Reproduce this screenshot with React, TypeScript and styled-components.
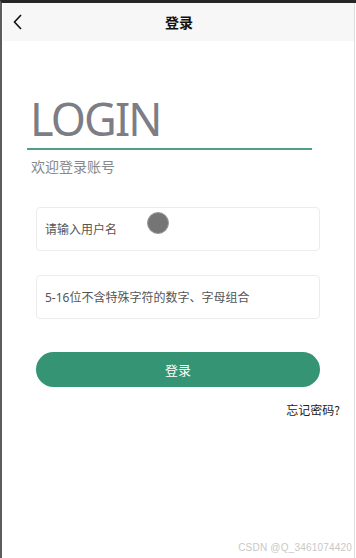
import { createGlobalStyle } from "styled-components";
import styled from "styled-components";

const GlobalStyle = createGlobalStyle`
  html, body {
    margin: 0;
    padding: 0;
    background: #ffffff;
  }
  body {
    font-family: "Noto Sans", "Noto Sans CJK SC", sans-serif;
  }
`;

const App = () => {
  return (
    <>
      <GlobalStyle />
      <Frame>
        <Screen>
          <Header>
            <BackButton>
              <svg width="10" height="16" viewBox="0 0 10 16" fill="none">
                <path d="M8 1 L1.5 8 L8 15" stroke="#111" strokeWidth="1.6" strokeLinejoin="miter" />
              </svg>
            </BackButton>
            <HeaderTitle>登录</HeaderTitle>
          </Header>

          <Content>
            <TitleBlock>
              <BigTitle>LOGIN</BigTitle>
            </TitleBlock>
            <Subtitle>欢迎登录账号</Subtitle>

            <Fields>
              <Field>
                <FieldText>请输入用户名</FieldText>
              </Field>
              <Field>
                <FieldText>5-16位不含特殊字符的数字、字母组合</FieldText>
              </Field>
            </Fields>

            <SubmitButton>登录</SubmitButton>

            <ForgotRow>
              <ForgotLink>忘记密码?</ForgotLink>
            </ForgotRow>
          </Content>

          <TouchDot />
          <Watermark>CSDN @Q_3461074420</Watermark>
        </Screen>
      </Frame>
    </>
  );
};

export default App;

const Frame = styled.div`
  display: flex;
  width: 356px;
  height: 558px;
  box-sizing: border-box;
  border-top: 3px solid #262626;
  border-left: 2px solid #5c5c5c;
  padding: 0 1px 0 1px;
  background: #ffffff;
  overflow: hidden;
`;

const Screen = styled.div`
  position: relative;
  flex: 1;
  display: flex;
  flex-direction: column;
  border-right: 1px solid #dedede;
  background: #ffffff;
`;

const Header = styled.div`
  position: relative;
  height: 38px;
  display: flex;
  align-items: center;
  justify-content: center;
  background: #f7f7f7;
`;

const BackButton = styled.div`
  position: absolute;
  left: 10px;
  top: 11px;
  display: flex;
`;

const HeaderTitle = styled.div`
  font-family: "Noto Sans CJK SC", sans-serif;
  font-size: 14px;
  font-weight: 700;
  color: #111;
  margin-left: 1px;
`;

const Content = styled.div`
  display: flex;
  flex-direction: column;
`;

const TitleBlock = styled.div`
  margin: 52px 0 0 24px;
  width: 285px;
  padding-bottom: 3px;
  border-bottom: 2px solid #4f9f80;
`;

const BigTitle = styled.div`
  font-family: "Noto Sans", sans-serif;
  font-size: 45px;
  line-height: 52px;
  color: #7d7d86;
  padding-left: 3px;
  letter-spacing: -1.9px;
`;

const Subtitle = styled.div`
  margin: 6px 0 0 28px;
  font-family: "Noto Sans CJK SC", sans-serif;
  font-size: 14px;
  line-height: 20px;
  color: #888;
`;

const Fields = styled.div`
  display: flex;
  flex-direction: column;
  gap: 24px;
  margin: 31px 0 0 33px;
  width: 284px;
`;

const Field = styled.div`
  height: 44px;
  box-sizing: border-box;
  border: 1px solid #ececec;
  border-radius: 4px;
  display: flex;
  align-items: center;
  padding-left: 8px;
`;

const FieldText = styled.span`
  font-family: "Noto Sans", "Noto Sans CJK SC", sans-serif;
  font-size: 12px;
  color: #555;
`;

const SubmitButton = styled.div`
  margin: 33px 0 0 33px;
  width: 284px;
  height: 35px;
  border-radius: 18px;
  background: #349474;
  color: #fff;
  font-family: "Noto Sans CJK SC", sans-serif;
  font-size: 13px;
  display: flex;
  align-items: center;
  justify-content: center;
`;

const ForgotRow = styled.div`
  display: flex;
  justify-content: flex-end;
  margin-top: 15px;
  padding-right: 14px;
`;

const ForgotLink = styled.span`
  font-family: "Noto Sans CJK SC", sans-serif;
  font-size: 12px;
  line-height: 16px;
  color: #222;
`;

const TouchDot = styled.div`
  position: absolute;
  left: 144px;
  top: 209px;
  width: 22px;
  height: 22px;
  box-sizing: border-box;
  border-radius: 50%;
  background: #757575;
  border: 1px solid #9a9a9a;
`;

const Watermark = styled.div`
  position: absolute;
  right: 2px;
  bottom: 5px;
  font-family: "Liberation Sans", sans-serif;
  font-size: 10px;
  color: #c8c8c8;
  letter-spacing: 0.2px;
`;
